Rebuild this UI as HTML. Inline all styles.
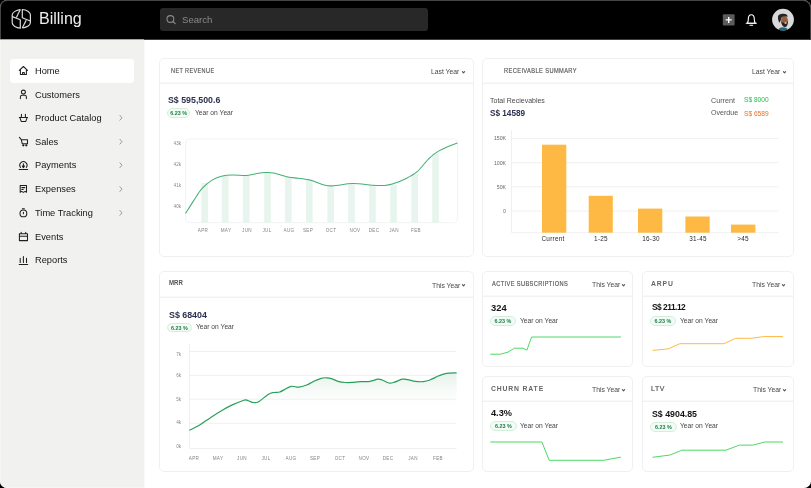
<!DOCTYPE html>
<html><head><meta charset="utf-8">
<style>
*{margin:0;padding:0;box-sizing:border-box}
html,body{width:811px;height:488px;overflow:hidden;background:#000;font-family:"Liberation Sans",sans-serif;-webkit-font-smoothing:antialiased}
#frame{position:absolute;left:0;top:0;width:811px;height:488px;border-radius:7px 8px 7px 7px;overflow:hidden;background:#fff}
#frameborder{position:absolute;left:0;top:0;width:811px;height:488px;border-radius:7px 8px 7px 7px;border:1px solid rgba(255,255,255,0.27);pointer-events:none}
.a{position:absolute;white-space:nowrap;line-height:1;will-change:transform}
#hdr{position:absolute;left:0;top:0;width:811px;height:39px;background:#000}
#side{position:absolute;left:0;top:39px;width:144px;height:449px;background:#f1f2f0}
.card{position:absolute;border:1px solid #f0f0f0;border-radius:5px;background:#fff}
.ch{position:absolute;left:0;right:0;height:2px;background:linear-gradient(#f9f9f9 50%,#f2f2f2 50%)}
.nav{position:absolute;left:34.9px;font-size:9.9px;color:#141414;line-height:1;transform-origin:0 0;transform:scaleX(0.94);will-change:auto}
svg{position:absolute;overflow:visible}
.t{position:absolute;white-space:nowrap;line-height:1;will-change:transform}
.badge{position:absolute;border:1px solid #d2efdc;background:#f2fbf5;border-radius:5px;color:#1f7c47;font-weight:700;text-align:center;white-space:nowrap;will-change:transform}
.ch{top:23px}
</style></head><body>
<div id="frame">
 <div id="hdr">
  <div class="a" style="left:160px;top:8px;width:267.5px;height:23px;background:#282828;border-radius:3px"></div>
  <svg style="left:0;top:0" width="811" height="39" viewBox="0 0 811 39">
   <g fill="none" stroke="#dcdcdc" stroke-width="1.2" stroke-linejoin="round">
    <path d="M20.3,9.6 C16.5,10.2 12.2,12.2 12.2,15 L12.2,22.8 C12.2,25.6 16.2,27.8 20.3,28.1 L20.3,19.8 L12.4,16.6"/>
    <path d="M20.3,9.6 L16.4,17.4"/>
    <path d="M22.3,28 C26.1,27.4 30.4,25.4 30.4,22.6 L30.4,14.8 C30.4,12 26.4,9.8 22.3,9.5 L22.3,17.8 L30.2,21"/>
    <path d="M22.3,28 L26.2,20.2"/>
   </g>
   <circle cx="170.4" cy="19.0" r="3.4" fill="none" stroke="#8a8a8a" stroke-width="1.1"/>
   <path d="M172.9,21.5 L175.2,23.6" stroke="#8a8a8a" stroke-width="1.2" stroke-linecap="round"/>
   <rect x="722.8" y="14.2" width="11.8" height="11.3" rx="1" fill="#5b5b5b"/>
   <path d="M728.7,16.9 V22.9 M725.7,19.9 H731.7" stroke="#fff" stroke-width="1.4"/>
   <path d="M747.3,23.2 C748.2,22 748.3,21.2 748.3,19.3 C748.3,16.6 749.6,14.8 751.3,14.8 C753,14.8 754.3,16.6 754.3,19.3 C754.3,21.2 754.4,22 755.3,23.2 Z" fill="none" stroke="#fff" stroke-width="1.1" stroke-linejoin="round"/>
   <path d="M746.2,23.3 H756.4" stroke="#fff" stroke-width="1.1" stroke-linecap="round"/>
   <path d="M750,25.2 H752.6" stroke="#fff" stroke-width="1.1" stroke-linecap="round"/>
   <defs><clipPath id="av"><circle cx="783" cy="19.6" r="10.9"/></clipPath></defs>
   <circle cx="783" cy="19.6" r="10.9" fill="#d9d9d9"/>
   <g clip-path="url(#av)">
    <path d="M777.2,31.5 C777.8,28.8 780,27.4 783,27.3 C786,27.3 788.3,28.6 789,31.5 Z" fill="#1d6a86"/>
    <ellipse cx="784.5" cy="21" rx="3.5" ry="5.1" fill="#9a5f3a"/>
    <path d="M778,17 C778,14.3 780.5,13.6 783.5,13.7 C786.5,13.8 788,15 787.5,17 C786,16 783.5,16.2 781.5,17.5 C781,19.5 780.5,21.5 779.5,22.8 C778.4,21 777.8,19 778,17 Z" fill="#252525"/>
    <path d="M781.3,22 C782,25.8 783.3,27 785,27 C786.8,27 787.9,25 787.9,21.5 C786.5,23 783,23.2 781.3,22 Z" fill="#2b211b"/>
    <ellipse cx="785.6" cy="23" rx="1.3" ry="0.7" fill="#f0e6e0"/>
   </g>
  </svg>
  <div class="a" style="left:181.6px;top:14.5px;font-size:9.6px;color:#8a8a8a">Search</div>
  <div class="a" style="left:38.5px;top:11px;font-size:16px;color:#eee;letter-spacing:0px">Billing</div>
 </div>
 <div class="a" style="left:0;top:39px;width:144px;height:1px;background:#a3a5a2;z-index:2"></div><div class="a" style="left:144px;top:39px;width:667px;height:1px;background:#3c3c3c;z-index:2"></div><div class="a" style="left:144px;top:40px;width:1px;height:448px;background:#f8f9f8"></div><div id="side">
  <div class="a" style="left:10px;top:19.8px;width:124px;height:23.8px;background:#fff;border-radius:3.5px"></div>
 </div>
 <svg style="left:0;top:0" width="144" height="300" viewBox="0 0 144 300">
  <g fill="none" stroke="#1f1f1f" stroke-width="1.05" stroke-linejoin="round" stroke-linecap="round">
   <path d="M19.3,70.4 L23.4,66.5 L27.5,70.4 M20.4,69.4 V74.4 H26.4 V69.4 M22.6,74.4 V72.4 H24.3 V74.4"/>
   <circle cx="23.4" cy="92.1" r="2"/>
   <path d="M20.4,98.6 V97 C20.4,95.9 21.2,95.2 22.2,95.2 H24.6 C25.6,95.2 26.4,95.9 26.4,97 V98.6"/>
   <path d="M19.3,117.5 H27.6 M21.5,114.3 L21.3,117.5 M25.4,114.3 V117.5 M19.9,117.6 L21.2,121.4 H25.8 L27.1,117.6"/>
   <path d="M19.4,137.4 L21.3,139.7 H27.5 V143.7 H22.2 L21.3,139.7"/>
   <circle cx="23.3" cy="145.3" r="0.6" fill="#1f1f1f"/><circle cx="26.3" cy="145.3" r="0.6" fill="#1f1f1f"/>
   <path d="M20.5,167.4 A3.6,3.6 0 1 1 26.3,167.4 M19.2,169.5 H27.7"/>
   <path d="M23.4,163.8 V167" /><path d="M22.3,166 L23.4,167.6 L24.5,166 Z" fill="#1f1f1f"/>
   <path d="M20.2,192.3 V185.4 H26.5 V192.3 L25.1,191.4 L23.4,192.4 L21.7,191.4 Z M21.8,187.6 H24.8 M21.8,189.5 H23.2"/>
   <circle cx="23.4" cy="213.4" r="3.4"/>
   <path d="M22.4,208.7 H24.4 M23.4,212.2 V213.8"/>
   <path d="M19.4,233.7 H27.5 V240.6 H19.4 Z M19.4,236.3 H27.5 M21.2,232.3 V233.7 M25.7,232.3 V233.7"/>
   <path d="M20.2,258.3 V262.4 M23.4,256.4 V262.4 M26.5,258.3 V262.4 M19.2,264.5 H27.7"/>
  </g>
  <g fill="none" stroke="#9a9a9a" stroke-width="1" stroke-linecap="round" stroke-linejoin="round">
   <path d="M119.9,115.4 L122,117.8 L119.9,120.2"/>
   <path d="M119.9,139.3 L122,141.7 L119.9,144.1"/>
   <path d="M119.9,162.8 L122,165.2 L119.9,167.6"/>
   <path d="M119.9,186.7 L122,189.1 L119.9,191.5"/>
   <path d="M119.9,210.5 L122,212.9 L119.9,215.3"/>
  </g>
 </svg>
 <div class="nav a" style="top:65.7px">Home</div>
 <div class="nav a" style="top:89.7px">Customers</div>
 <div class="nav a" style="top:112.7px">Product Catalog</div>
 <div class="nav a" style="top:136.7px">Sales</div>
 <div class="nav a" style="top:160.2px">Payments</div>
 <div class="nav a" style="top:184.2px">Expenses</div>
 <div class="nav a" style="top:208.2px">Time Tracking</div>
 <div class="nav a" style="top:231.7px">Events</div>
 <div class="nav a" style="top:255.2px">Reports</div>

 <div class="card" style="left:159px;top:58px;width:315px;height:199px"><div class="ch"></div></div>
<div class="card" style="left:482px;top:58px;width:312px;height:199px"><div class="ch"></div></div>
<div class="card" style="left:159px;top:271px;width:315px;height:201px"><div class="ch" style="top:24px"></div></div>
<div class="card" style="left:482px;top:271px;width:151px;height:96px"><div class="ch"></div></div>
<div class="card" style="left:642px;top:271px;width:152px;height:96px"><div class="ch"></div></div>
<div class="card" style="left:482px;top:376px;width:151px;height:96px"><div class="ch"></div></div>
<div class="card" style="left:642px;top:376px;width:152px;height:96px"><div class="ch"></div></div><svg style="left:0;top:0" width="811" height="488" viewBox="0 0 811 488"><rect x="185.5" y="139" width="272" height="83.7" rx="4" fill="none" stroke="#f2f3f5" stroke-width="1"/><rect x="201.3" y="183" width="6.7" height="39.69999999999999" fill="#e8f5ee"/><rect x="221.8" y="176" width="6.7" height="46.69999999999999" fill="#e8f5ee"/><rect x="242.9" y="175.4" width="6.7" height="47.29999999999998" fill="#e8f5ee"/><rect x="264.2" y="172.5" width="6.7" height="50.19999999999999" fill="#e8f5ee"/><rect x="285" y="177" width="6.7" height="45.69999999999999" fill="#e8f5ee"/><rect x="306" y="179" width="6.7" height="43.69999999999999" fill="#e8f5ee"/><rect x="327.3" y="185.8" width="6.7" height="36.89999999999998" fill="#e8f5ee"/><rect x="348.2" y="184.2" width="6.7" height="38.5" fill="#e8f5ee"/><rect x="369.1" y="185.2" width="6.7" height="37.5" fill="#e8f5ee"/><rect x="390.2" y="184.6" width="6.7" height="38.099999999999994" fill="#e8f5ee"/><rect x="411.3" y="174" width="6.7" height="48.69999999999999" fill="#e8f5ee"/><rect x="432.2" y="153.4" width="6.7" height="69.29999999999998" fill="#e8f5ee"/><path d="M185.50,213.50 C186.87,211.35 190.97,204.73 193.70,200.60 C196.43,196.47 198.83,192.12 201.90,188.70 C204.97,185.28 208.68,182.22 212.10,180.10 C215.52,177.98 218.98,176.85 222.40,176.00 C225.82,175.15 228.50,175.10 232.60,175.00 C236.70,174.90 242.90,175.65 247.00,175.40 C251.10,175.15 254.13,173.98 257.20,173.50 C260.27,173.02 262.67,172.60 265.40,172.50 C268.13,172.40 269.83,172.15 273.60,172.90 C277.37,173.65 283.90,176.12 288.00,177.00 C292.10,177.88 294.80,177.75 298.20,178.20 C301.60,178.65 305.60,179.12 308.40,179.70 C311.20,180.28 312.23,180.78 315.00,181.70 C317.77,182.62 321.93,184.52 325.00,185.20 C328.07,185.88 328.75,186.07 333.40,185.80 C338.05,185.53 346.40,183.70 352.90,183.60 C359.40,183.50 367.10,184.90 372.40,185.20 C377.70,185.50 381.38,185.58 384.70,185.40 C388.02,185.22 388.98,185.13 392.30,184.10 C395.62,183.07 400.50,181.23 404.60,179.20 C408.70,177.17 412.82,175.38 416.90,171.90 C420.98,168.42 425.63,161.68 429.10,158.30 C432.57,154.92 434.62,153.53 437.70,151.60 C440.78,149.67 444.32,148.13 447.60,146.70 C450.88,145.27 455.77,143.62 457.40,143.00" fill="none" stroke="#45b073" stroke-width="1.05"/><path d="M511.5,130 V232.7 H778.7" fill="none" stroke="#f0f0f0" stroke-width="1"/><path d="M511.5,138.6 H778.7" stroke="#f0f0f0" stroke-width="1"/><path d="M511.5,162.7 H778.7" stroke="#f0f0f0" stroke-width="1"/><path d="M511.5,186.8 H778.7" stroke="#f0f0f0" stroke-width="1"/><path d="M511.5,211 H778.7" stroke="#f0f0f0" stroke-width="1"/><rect x="542" y="144.7" width="24.299999999999955" height="88.0" fill="#fdb944"/><rect x="588.7" y="195.8" width="24.09999999999991" height="36.89999999999998" fill="#fdb944"/><rect x="638" y="208.6" width="24.299999999999955" height="24.099999999999994" fill="#fdb944"/><rect x="685.4" y="216.5" width="24.300000000000068" height="16.19999999999999" fill="#fdb944"/><rect x="731" y="224.6" width="24.399999999999977" height="8.099999999999994" fill="#fdb944"/><defs><linearGradient id="mg" gradientUnits="userSpaceOnUse" x1="0" y1="372" x2="0" y2="412"><stop offset="0" stop-color="#e4f0e8"/><stop offset="1" stop-color="#ffffff" stop-opacity="0"/></linearGradient></defs><path d="M189.30,430.30 C190.97,429.47 195.72,427.45 199.30,425.30 C202.88,423.15 206.97,419.92 210.80,417.40 C214.63,414.88 218.72,412.28 222.30,410.20 C225.88,408.12 228.72,406.57 232.30,404.90 C235.88,403.23 241.40,400.98 243.80,400.20 C246.20,399.42 245.27,399.85 246.70,400.20 C248.13,400.55 250.48,402.00 252.40,402.30 C254.32,402.60 255.57,403.32 258.20,402.00 C260.83,400.68 265.57,395.98 268.20,394.40 C270.83,392.82 272.08,392.90 274.00,392.50 C275.92,392.10 277.97,392.48 279.70,392.00 C281.43,391.52 282.50,390.55 284.40,389.60 C286.30,388.65 288.68,386.70 291.10,386.30 C293.52,385.90 296.32,387.42 298.90,387.20 C301.48,386.98 304.20,385.93 306.60,385.00 C309.00,384.07 310.88,382.72 313.30,381.60 C315.72,380.48 318.88,378.93 321.10,378.30 C323.32,377.67 324.75,377.70 326.60,377.80 C328.45,377.90 330.17,378.27 332.20,378.90 C334.23,379.53 336.58,381.00 338.80,381.60 C341.02,382.20 343.28,382.37 345.50,382.50 C347.72,382.63 349.70,382.55 352.10,382.40 C354.50,382.25 356.92,381.77 359.90,381.60 C362.88,381.43 367.02,381.80 370.00,381.40 C372.98,381.00 375.77,379.43 377.80,379.20 C379.83,378.97 380.35,379.37 382.20,380.00 C384.05,380.63 386.87,382.63 388.90,383.00 C390.93,383.37 392.18,382.83 394.40,382.20 C396.62,381.57 399.98,379.62 402.20,379.20 C404.42,378.78 405.48,379.33 407.70,379.70 C409.92,380.07 412.90,381.08 415.50,381.40 C418.10,381.72 420.90,381.83 423.30,381.60 C425.70,381.37 427.32,380.97 429.90,380.00 C432.48,379.03 436.02,376.92 438.80,375.80 C441.58,374.68 443.63,373.80 446.60,373.30 C449.57,372.80 454.93,372.88 456.60,372.80 L456.6,447 L189.3,447 Z" fill="url(#mg)"/><path d="M189.5,351.5 H456.1" stroke="#f0f0f0" stroke-width="1"/><path d="M189.5,375.4 H456.1" stroke="#f0f0f0" stroke-width="1"/><path d="M189.5,399.2 H456.1" stroke="#f0f0f0" stroke-width="1"/><path d="M189.5,423.3 H456.1" stroke="#f0f0f0" stroke-width="1"/><path d="M189.5,344 V448.5 H456.6" fill="none" stroke="#f0f0f0" stroke-width="1"/><path d="M189.30,430.30 C190.97,429.47 195.72,427.45 199.30,425.30 C202.88,423.15 206.97,419.92 210.80,417.40 C214.63,414.88 218.72,412.28 222.30,410.20 C225.88,408.12 228.72,406.57 232.30,404.90 C235.88,403.23 241.40,400.98 243.80,400.20 C246.20,399.42 245.27,399.85 246.70,400.20 C248.13,400.55 250.48,402.00 252.40,402.30 C254.32,402.60 255.57,403.32 258.20,402.00 C260.83,400.68 265.57,395.98 268.20,394.40 C270.83,392.82 272.08,392.90 274.00,392.50 C275.92,392.10 277.97,392.48 279.70,392.00 C281.43,391.52 282.50,390.55 284.40,389.60 C286.30,388.65 288.68,386.70 291.10,386.30 C293.52,385.90 296.32,387.42 298.90,387.20 C301.48,386.98 304.20,385.93 306.60,385.00 C309.00,384.07 310.88,382.72 313.30,381.60 C315.72,380.48 318.88,378.93 321.10,378.30 C323.32,377.67 324.75,377.70 326.60,377.80 C328.45,377.90 330.17,378.27 332.20,378.90 C334.23,379.53 336.58,381.00 338.80,381.60 C341.02,382.20 343.28,382.37 345.50,382.50 C347.72,382.63 349.70,382.55 352.10,382.40 C354.50,382.25 356.92,381.77 359.90,381.60 C362.88,381.43 367.02,381.80 370.00,381.40 C372.98,381.00 375.77,379.43 377.80,379.20 C379.83,378.97 380.35,379.37 382.20,380.00 C384.05,380.63 386.87,382.63 388.90,383.00 C390.93,383.37 392.18,382.83 394.40,382.20 C396.62,381.57 399.98,379.62 402.20,379.20 C404.42,378.78 405.48,379.33 407.70,379.70 C409.92,380.07 412.90,381.08 415.50,381.40 C418.10,381.72 420.90,381.83 423.30,381.60 C425.70,381.37 427.32,380.97 429.90,380.00 C432.48,379.03 436.02,376.92 438.80,375.80 C441.58,374.68 443.63,373.80 446.60,373.30 C449.57,372.80 454.93,372.88 456.60,372.80" fill="none" stroke="#2a9f5b" stroke-width="1.2"/><polyline points="490.3,354.2 500.4,354.2 508,352.1 514.4,348.2 523,348.2 526.9,350.2 531.6,337 620.9,337" fill="none" stroke="#4cd964" stroke-width="1"/><polyline points="652.5,350.4 668,348.9 679.8,343.7 723.9,343.7 735.7,338.3 750.8,338.3 763.7,336.6 783,336.6" fill="none" stroke="#fdb944" stroke-width="1"/><polyline points="490.3,442 541.9,442 549.2,460.3 603.7,460.3 620.9,457.1" fill="none" stroke="#4cd964" stroke-width="1"/><polyline points="652.5,457.3 670.1,455 681.9,450.2 726,450.2 739.4,445.1 752.9,445.1 764.7,442 783,442" fill="none" stroke="#4cd964" stroke-width="1"/></svg><div class="t" style="left:170.8px;top:70.6px;font-size:6.6px;color:#555;font-weight:400;letter-spacing:0.45px;transform-origin:0% 50%;transform:translate(0,-50%) scaleX(0.84);will-change:auto;-webkit-text-stroke:0.15px #555;">NET REVENUE</div>
<div class="t" style="left:431.2px;top:71.9px;font-size:6.8px;color:#484848;font-weight:400;letter-spacing:0px;transform-origin:0% 50%;transform:translate(0,-50%);">Last Year</div>
<svg style="left:462.3px;top:70.5px" width="4" height="3" viewBox="0 0 4 3"><path d="M0.4,0.6 L1.5,1.9 L2.6,0.6" fill="none" stroke="#555" stroke-width="1.1" stroke-linecap="round" stroke-linejoin="round"/></svg>
<div class="t" style="left:167.7px;top:99.9px;font-size:8.8px;color:#2c3150;font-weight:700;letter-spacing:0px;transform-origin:0% 50%;transform:translate(0,-50%);">S$ 595,500.6</div>
<div class="badge" style="left:167.3px;top:108.3px;width:23.399999999999977px;height:10.0px;font-size:5.4px;line-height:9.0px">6.23 %</div>
<div class="t" style="left:195px;top:113px;font-size:6.7px;color:#454545;font-weight:400;letter-spacing:0px;transform-origin:0% 50%;transform:translate(0,-50%);">Year on Year</div>
<div class="t" style="left:503.7px;top:70.6px;font-size:6.6px;color:#555;font-weight:400;letter-spacing:0.45px;transform-origin:0% 50%;transform:translate(0,-50%) scaleX(0.864);will-change:auto;-webkit-text-stroke:0.15px #555;">RECEIVABLE SUMMARY</div>
<div class="t" style="left:752.4px;top:71.9px;font-size:6.8px;color:#484848;font-weight:400;letter-spacing:0px;transform-origin:0% 50%;transform:translate(0,-50%);">Last Year</div>
<svg style="left:783.3px;top:70.5px" width="4" height="3" viewBox="0 0 4 3"><path d="M0.4,0.6 L1.5,1.9 L2.6,0.6" fill="none" stroke="#555" stroke-width="1.1" stroke-linecap="round" stroke-linejoin="round"/></svg>
<div class="t" style="left:489.9px;top:99.5px;font-size:7.0px;color:#4a4a4a;font-weight:400;letter-spacing:0px;transform-origin:0% 50%;transform:translate(0,-50%);">Total Recievables</div>
<div class="t" style="left:489.9px;top:113.9px;font-size:8.2px;color:#2c3150;font-weight:700;letter-spacing:0px;transform-origin:0% 50%;transform:translate(0,-50%);">S$ 14589</div>
<div class="t" style="left:711px;top:100.5px;font-size:7.2px;color:#555;font-weight:400;letter-spacing:0px;transform-origin:0% 50%;transform:translate(0,-50%);">Current</div>
<div class="t" style="left:711px;top:114.1px;font-size:7.1px;color:#555;font-weight:400;letter-spacing:0px;transform-origin:0% 50%;transform:translate(0,-50%);">Overdue</div>
<div class="t" style="left:744px;top:100.4px;font-size:6.6px;color:#22c04a;font-weight:400;letter-spacing:0px;transform-origin:0% 50%;transform:translate(0,-50%);">S$ 8000</div>
<div class="t" style="left:744px;top:113.5px;font-size:6.6px;color:#ef6f22;font-weight:400;letter-spacing:0px;transform-origin:0% 50%;transform:translate(0,-50%);">S$ 6589</div>
<div class="t" style="left:169.3px;top:283.4px;font-size:6.6px;color:#555;font-weight:700;letter-spacing:0px;transform-origin:0% 50%;transform:translate(0,-50%) scaleX(0.92);will-change:auto;">MRR</div>
<div class="t" style="left:431.9px;top:285.5px;font-size:6.8px;color:#484848;font-weight:400;letter-spacing:0px;transform-origin:0% 50%;transform:translate(0,-50%);">This Year</div>
<svg style="left:462.3px;top:284.3px" width="4" height="3" viewBox="0 0 4 3"><path d="M0.4,0.6 L1.5,1.9 L2.6,0.6" fill="none" stroke="#555" stroke-width="1.1" stroke-linecap="round" stroke-linejoin="round"/></svg>
<div class="t" style="left:168.7px;top:314.7px;font-size:8.85px;color:#2c3150;font-weight:700;letter-spacing:0px;transform-origin:0% 50%;transform:translate(0,-50%);">S$ 68404</div>
<div class="badge" style="left:166.9px;top:323px;width:24.69999999999999px;height:9.4px;font-size:5.4px;line-height:8.4px">6.23 %</div>
<div class="t" style="left:196px;top:327.2px;font-size:6.7px;color:#454545;font-weight:400;letter-spacing:0px;transform-origin:0% 50%;transform:translate(0,-50%);">Year on Year</div>
<div class="t" style="left:492.3px;top:283.8px;font-size:6.6px;color:#555;font-weight:400;letter-spacing:0.45px;transform-origin:0% 50%;transform:translate(0,-50%) scaleX(0.86);will-change:auto;-webkit-text-stroke:0.15px #555;">ACTIVE SUBSCRIPTIONS</div>
<div class="t" style="left:591.8px;top:284.8px;font-size:6.8px;color:#484848;font-weight:400;letter-spacing:0px;transform-origin:0% 50%;transform:translate(0,-50%);">This Year</div>
<svg style="left:622.0999999999999px;top:283.6px" width="4" height="3" viewBox="0 0 4 3"><path d="M0.4,0.6 L1.5,1.9 L2.6,0.6" fill="none" stroke="#555" stroke-width="1.1" stroke-linecap="round" stroke-linejoin="round"/></svg>
<div class="t" style="left:490.6px;top:307.8px;font-size:9px;color:#141414;font-weight:700;letter-spacing:0px;transform-origin:0% 50%;transform:translate(0,-50%) scaleX(1.04);will-change:auto;">324</div>
<div class="badge" style="left:490px;top:316.2px;width:25.799999999999955px;height:9.8px;font-size:5.4px;line-height:8.8px">6.23 %</div>
<div class="t" style="left:519.8px;top:321px;font-size:6.7px;color:#454545;font-weight:400;letter-spacing:0px;transform-origin:0% 50%;transform:translate(0,-50%);">Year on Year</div>
<div class="t" style="left:651.2px;top:284.1px;font-size:6.8px;color:#666;font-weight:700;letter-spacing:0.9px;transform-origin:0% 50%;transform:translate(0,-50%);">ARPU</div>
<div class="t" style="left:751.8px;top:284.8px;font-size:6.8px;color:#484848;font-weight:400;letter-spacing:0px;transform-origin:0% 50%;transform:translate(0,-50%);">This Year</div>
<svg style="left:782.3px;top:283.6px" width="4" height="3" viewBox="0 0 4 3"><path d="M0.4,0.6 L1.5,1.9 L2.6,0.6" fill="none" stroke="#555" stroke-width="1.1" stroke-linecap="round" stroke-linejoin="round"/></svg>
<div class="t" style="left:652px;top:307.2px;font-size:8.4px;color:#141414;font-weight:700;letter-spacing:-0.5px;transform-origin:0% 50%;transform:translate(0,-50%);">S$ 211.12</div>
<div class="badge" style="left:650.3px;top:316.2px;width:25.600000000000023px;height:10.1px;font-size:5.4px;line-height:9.1px">6.23 %</div>
<div class="t" style="left:680.2px;top:320.8px;font-size:6.7px;color:#454545;font-weight:400;letter-spacing:0px;transform-origin:0% 50%;transform:translate(0,-50%);">Year on Year</div>
<div class="t" style="left:490.8px;top:388.9px;font-size:6.8px;color:#666;font-weight:700;letter-spacing:0.86px;transform-origin:0% 50%;transform:translate(0,-50%);">CHURN RATE</div>
<div class="t" style="left:591.8px;top:389.8px;font-size:6.8px;color:#484848;font-weight:400;letter-spacing:0px;transform-origin:0% 50%;transform:translate(0,-50%);">This Year</div>
<svg style="left:622.0999999999999px;top:388.6px" width="4" height="3" viewBox="0 0 4 3"><path d="M0.4,0.6 L1.5,1.9 L2.6,0.6" fill="none" stroke="#555" stroke-width="1.1" stroke-linecap="round" stroke-linejoin="round"/></svg>
<div class="t" style="left:490.8px;top:413.4px;font-size:9.8px;color:#141414;font-weight:700;letter-spacing:0px;transform-origin:0% 50%;transform:translate(0,-50%) scaleX(0.94);will-change:auto;">4.3%</div>
<div class="badge" style="left:490.3px;top:421.2px;width:26.69999999999999px;height:10.1px;font-size:5.4px;line-height:9.1px">6.23 %</div>
<div class="t" style="left:520.2px;top:426px;font-size:6.7px;color:#454545;font-weight:400;letter-spacing:0px;transform-origin:0% 50%;transform:translate(0,-50%);">Year on Year</div>
<div class="t" style="left:650.8px;top:388.9px;font-size:6.9px;color:#555;font-weight:400;letter-spacing:0.6px;transform-origin:0% 50%;transform:translate(0,-50%);-webkit-text-stroke:0.2px #555;">LTV</div>
<div class="t" style="left:752.9px;top:389.8px;font-size:6.8px;color:#484848;font-weight:400;letter-spacing:0px;transform-origin:0% 50%;transform:translate(0,-50%);">This Year</div>
<svg style="left:783.3px;top:388.6px" width="4" height="3" viewBox="0 0 4 3"><path d="M0.4,0.6 L1.5,1.9 L2.6,0.6" fill="none" stroke="#555" stroke-width="1.1" stroke-linecap="round" stroke-linejoin="round"/></svg>
<div class="t" style="left:651.8px;top:414.1px;font-size:8.8px;color:#141414;font-weight:700;letter-spacing:0px;transform-origin:0% 50%;transform:translate(0,-50%);">S$ 4904.85</div>
<div class="badge" style="left:650.3px;top:421.6px;width:26.700000000000045px;height:10.0px;font-size:5.4px;line-height:9.0px">6.23 %</div>
<div class="t" style="left:680.2px;top:426.4px;font-size:6.7px;color:#454545;font-weight:400;letter-spacing:0px;transform-origin:0% 50%;transform:translate(0,-50%);">Year on Year</div>
<div class="t" style="left:181px;top:144.2px;font-size:4.6px;color:#858585;font-weight:400;letter-spacing:0px;transform-origin:100% 50%;transform:translate(-100%,-50%);">43k</div>
<div class="t" style="left:181px;top:165.3px;font-size:4.6px;color:#858585;font-weight:400;letter-spacing:0px;transform-origin:100% 50%;transform:translate(-100%,-50%);">42k</div>
<div class="t" style="left:181px;top:185.8px;font-size:4.6px;color:#858585;font-weight:400;letter-spacing:0px;transform-origin:100% 50%;transform:translate(-100%,-50%);">41k</div>
<div class="t" style="left:181px;top:207px;font-size:4.6px;color:#858585;font-weight:400;letter-spacing:0px;transform-origin:100% 50%;transform:translate(-100%,-50%);">40k</div>
<div class="t" style="left:202.5px;top:231.0px;font-size:4.6px;color:#858585;font-weight:400;letter-spacing:0.3px;transform-origin:50% 50%;transform:translate(-50%,-50%);">APR</div>
<div class="t" style="left:225.5px;top:231.0px;font-size:4.6px;color:#858585;font-weight:400;letter-spacing:0.3px;transform-origin:50% 50%;transform:translate(-50%,-50%);">MAY</div>
<div class="t" style="left:247px;top:231.0px;font-size:4.6px;color:#858585;font-weight:400;letter-spacing:0.3px;transform-origin:50% 50%;transform:translate(-50%,-50%);">JUN</div>
<div class="t" style="left:266.8px;top:231.0px;font-size:4.6px;color:#858585;font-weight:400;letter-spacing:0.3px;transform-origin:50% 50%;transform:translate(-50%,-50%);">JUL</div>
<div class="t" style="left:289px;top:231.0px;font-size:4.6px;color:#858585;font-weight:400;letter-spacing:0.3px;transform-origin:50% 50%;transform:translate(-50%,-50%);">AUG</div>
<div class="t" style="left:308.4px;top:231.0px;font-size:4.6px;color:#858585;font-weight:400;letter-spacing:0.3px;transform-origin:50% 50%;transform:translate(-50%,-50%);">SEP</div>
<div class="t" style="left:331.4px;top:231.0px;font-size:4.6px;color:#858585;font-weight:400;letter-spacing:0.3px;transform-origin:50% 50%;transform:translate(-50%,-50%);">OCT</div>
<div class="t" style="left:354.5px;top:231.0px;font-size:4.6px;color:#858585;font-weight:400;letter-spacing:0.3px;transform-origin:50% 50%;transform:translate(-50%,-50%);">NOV</div>
<div class="t" style="left:373.8px;top:231.0px;font-size:4.6px;color:#858585;font-weight:400;letter-spacing:0.3px;transform-origin:50% 50%;transform:translate(-50%,-50%);">DEC</div>
<div class="t" style="left:393.5px;top:231.0px;font-size:4.6px;color:#858585;font-weight:400;letter-spacing:0.3px;transform-origin:50% 50%;transform:translate(-50%,-50%);">JAN</div>
<div class="t" style="left:415.8px;top:231.0px;font-size:4.6px;color:#858585;font-weight:400;letter-spacing:0.3px;transform-origin:50% 50%;transform:translate(-50%,-50%);">FEB</div>
<div class="t" style="left:506.2px;top:139.4px;font-size:5.2px;color:#666;font-weight:400;letter-spacing:0px;transform-origin:100% 50%;transform:translate(-100%,-50%);">150K</div>
<div class="t" style="left:506.2px;top:163.5px;font-size:5.2px;color:#666;font-weight:400;letter-spacing:0px;transform-origin:100% 50%;transform:translate(-100%,-50%);">100K</div>
<div class="t" style="left:506.2px;top:187.60000000000002px;font-size:5.2px;color:#666;font-weight:400;letter-spacing:0px;transform-origin:100% 50%;transform:translate(-100%,-50%);">50K</div>
<div class="t" style="left:506.2px;top:211.8px;font-size:5.2px;color:#666;font-weight:400;letter-spacing:0px;transform-origin:100% 50%;transform:translate(-100%,-50%);">0</div>
<div class="t" style="left:553.3px;top:239.3px;font-size:6.4px;color:#2a2a2a;font-weight:400;letter-spacing:0.25px;transform-origin:50% 50%;transform:translate(-50%,-50%);">Current</div>
<div class="t" style="left:601.2px;top:239.3px;font-size:6.4px;color:#2a2a2a;font-weight:400;letter-spacing:0.25px;transform-origin:50% 50%;transform:translate(-50%,-50%);">1-25</div>
<div class="t" style="left:651px;top:239.3px;font-size:6.4px;color:#2a2a2a;font-weight:400;letter-spacing:0.25px;transform-origin:50% 50%;transform:translate(-50%,-50%);">16-30</div>
<div class="t" style="left:698.4px;top:239.3px;font-size:6.4px;color:#2a2a2a;font-weight:400;letter-spacing:0.25px;transform-origin:50% 50%;transform:translate(-50%,-50%);">31-45</div>
<div class="t" style="left:743.1px;top:239.3px;font-size:6.4px;color:#2a2a2a;font-weight:400;letter-spacing:0.25px;transform-origin:50% 50%;transform:translate(-50%,-50%);">&gt;45</div>
<div class="t" style="left:181px;top:354.8px;font-size:4.6px;color:#858585;font-weight:400;letter-spacing:0px;transform-origin:100% 50%;transform:translate(-100%,-50%);">7k</div>
<div class="t" style="left:181px;top:376.1px;font-size:4.6px;color:#858585;font-weight:400;letter-spacing:0px;transform-origin:100% 50%;transform:translate(-100%,-50%);">6k</div>
<div class="t" style="left:181px;top:400px;font-size:4.6px;color:#858585;font-weight:400;letter-spacing:0px;transform-origin:100% 50%;transform:translate(-100%,-50%);">5k</div>
<div class="t" style="left:181px;top:423px;font-size:4.6px;color:#858585;font-weight:400;letter-spacing:0px;transform-origin:100% 50%;transform:translate(-100%,-50%);">4k</div>
<div class="t" style="left:181px;top:447px;font-size:4.6px;color:#858585;font-weight:400;letter-spacing:0px;transform-origin:100% 50%;transform:translate(-100%,-50%);">0k</div>
<div class="t" style="left:193.5px;top:459.2px;font-size:4.6px;color:#858585;font-weight:400;letter-spacing:0.35px;transform-origin:50% 50%;transform:translate(-50%,-50%);">APR</div>
<div class="t" style="left:217.7px;top:459.2px;font-size:4.6px;color:#858585;font-weight:400;letter-spacing:0.35px;transform-origin:50% 50%;transform:translate(-50%,-50%);">MAY</div>
<div class="t" style="left:242.2px;top:459.2px;font-size:4.6px;color:#858585;font-weight:400;letter-spacing:0.35px;transform-origin:50% 50%;transform:translate(-50%,-50%);">JUN</div>
<div class="t" style="left:266.4px;top:459.2px;font-size:4.6px;color:#858585;font-weight:400;letter-spacing:0.35px;transform-origin:50% 50%;transform:translate(-50%,-50%);">JUL</div>
<div class="t" style="left:290.9px;top:459.2px;font-size:4.6px;color:#858585;font-weight:400;letter-spacing:0.35px;transform-origin:50% 50%;transform:translate(-50%,-50%);">AUG</div>
<div class="t" style="left:315.4px;top:459.2px;font-size:4.6px;color:#858585;font-weight:400;letter-spacing:0.35px;transform-origin:50% 50%;transform:translate(-50%,-50%);">SEP</div>
<div class="t" style="left:339.5px;top:459.2px;font-size:4.6px;color:#858585;font-weight:400;letter-spacing:0.35px;transform-origin:50% 50%;transform:translate(-50%,-50%);">OCT</div>
<div class="t" style="left:364.3px;top:459.2px;font-size:4.6px;color:#858585;font-weight:400;letter-spacing:0.35px;transform-origin:50% 50%;transform:translate(-50%,-50%);">NOV</div>
<div class="t" style="left:388.2px;top:459.2px;font-size:4.6px;color:#858585;font-weight:400;letter-spacing:0.35px;transform-origin:50% 50%;transform:translate(-50%,-50%);">DEC</div>
<div class="t" style="left:412.7px;top:459.2px;font-size:4.6px;color:#858585;font-weight:400;letter-spacing:0.35px;transform-origin:50% 50%;transform:translate(-50%,-50%);">JAN</div>
<div class="t" style="left:437.5px;top:459.2px;font-size:4.6px;color:#858585;font-weight:400;letter-spacing:0.35px;transform-origin:50% 50%;transform:translate(-50%,-50%);">FEB</div>
</div><div id="frameborder"></div></body></html>
